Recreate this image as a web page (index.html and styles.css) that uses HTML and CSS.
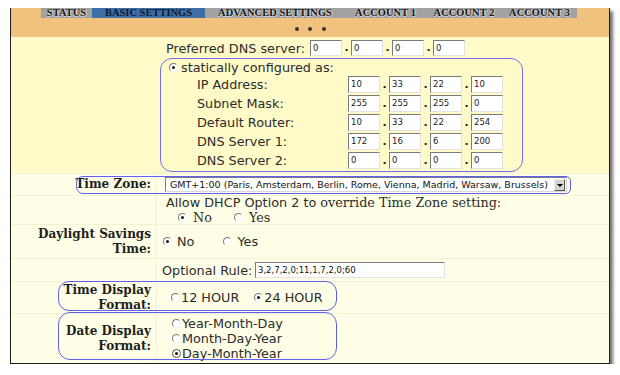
FILE: index.html
```html
<!DOCTYPE html>
<html>
<head>
<meta charset="utf-8">
<title>Basic Settings</title>
<link rel="stylesheet" href="styles.css">
</head>
<body>
<div class="window">
  <div class="header">
    <div class="tabs">
      <span class="tab t1">STATUS</span>
      <span class="tab t2 active">BASIC SETTINGS</span>
      <span class="tab t3">ADVANCED SETTINGS</span>
      <span class="tab t4">ACCOUNT 1</span>
      <span class="tab t5">ACCOUNT 2</span>
      <span class="tab t6">ACCOUNT 3</span>
    </div>
    <div class="dots"><i></i><i></i><i></i></div>
  </div>

  <div class="dns">
    <div class="pref">
      <span class="pref-label">Preferred DNS server:</span>
      <div class="ip">
        <span class="box">0</span><span class="sep">.</span><span class="box">0</span><span class="sep">.</span><span class="box">0</span><span class="sep">.</span><span class="box">0</span>
      </div>
    </div>
    <div class="static">
      <div class="static-head"><span class="radio on"></span><span>statically configured as:</span></div>
      <div class="ip-row"><span class="ip-label">IP Address:</span>
        <div class="ip"><span class="box">10</span><span class="sep">.</span><span class="box">33</span><span class="sep">.</span><span class="box">22</span><span class="sep">.</span><span class="box">10</span></div></div>
      <div class="ip-row"><span class="ip-label">Subnet Mask:</span>
        <div class="ip"><span class="box">255</span><span class="sep">.</span><span class="box">255</span><span class="sep">.</span><span class="box">255</span><span class="sep">.</span><span class="box">0</span></div></div>
      <div class="ip-row"><span class="ip-label">Default Router:</span>
        <div class="ip"><span class="box">10</span><span class="sep">.</span><span class="box">33</span><span class="sep">.</span><span class="box">22</span><span class="sep">.</span><span class="box">254</span></div></div>
      <div class="ip-row"><span class="ip-label">DNS Server 1:</span>
        <div class="ip"><span class="box">172</span><span class="sep">.</span><span class="box">16</span><span class="sep">.</span><span class="box">6</span><span class="sep">.</span><span class="box">200</span></div></div>
      <div class="ip-row"><span class="ip-label">DNS Server 2:</span>
        <div class="ip"><span class="box">0</span><span class="sep">.</span><span class="box">0</span><span class="sep">.</span><span class="box">0</span><span class="sep">.</span><span class="box">0</span></div></div>
    </div>
  </div>

  <div class="settings">
    <div class="row r-tz">
      <div class="lbl">Time Zone:</div>
      <div class="val v-tz">
        <div class="select"><span class="sel-text">GMT+1:00 (Paris, Amsterdam, Berlin, Rome, Vienna, Madrid, Warsaw, Brussels)</span><span class="sel-btn"></span></div>
      </div>
    </div>
    <div class="row r-dhcp">
      <div class="lbl"></div>
      <div class="val v-dhcp">
        <div class="dhcp-text">Allow DHCP Option 2 to <span class="serif">override Time Zone setting:</span></div>
        <div class="choices serif dhcp-choices">
          <span class="opt"><span class="radio on"></span>No</span>
          <span class="opt"><span class="radio"></span>Yes</span>
        </div>
      </div>
    </div>
    <div class="row r-dst">
      <div class="lbl">Daylight Savings<br>Time:</div>
      <div class="val v-dst">
        <div class="choices dst-choices">
          <span class="opt"><span class="radio on"></span>No</span>
          <span class="opt"><span class="radio"></span>Yes</span>
        </div>
      </div>
    </div>
    <div class="row r-rule">
      <div class="lbl"></div>
      <div class="val v-rule">
        <span class="rule-label">Optional Rule:</span><span class="rule-box">3,2,7,2,0;11,1,7,2,0;60</span>
      </div>
    </div>
    <div class="row r-time">
      <div class="lbl">Time Display<br>Format:</div>
      <div class="val v-time">
        <span class="opt"><span class="radio"></span>12 HOUR</span>
        <span class="opt"><span class="radio on"></span>24 HOUR</span>
      </div>
    </div>
    <div class="row r-date">
      <div class="lbl">Date Display<br>Format:</div>
      <div class="val v-date">
        <span class="opt"><span class="radio"></span>Year-Month-Day</span>
        <span class="opt"><span class="radio"></span>Month-Day-Year</span>
        <span class="opt"><span class="radio on ring"></span>Day-Month-Year</span>
      </div>
    </div>
  </div>

  <div class="mark m-tz"></div>
  <div class="mark m-time"></div>
  <div class="mark m-date"></div>
</div>
</body>
</html>
```

FILE: styles.css
```css
html, body {
  margin: 0;
  background: #ffffff;
}
body {
  font-family: "DejaVu Sans", sans-serif;
  color: #2c2c2c;
  font-size: 12.8px;
}
.window {
  position: relative;
  margin: 8px 0 0 10px;
  width: 598px;
  border: 1px solid #1c1c1c;
  border-top: 0;
  box-shadow: 3px 3px 3px rgba(0, 0, 0, 0.55);
}

/* header */
.header {
  height: 29px;
  background: #f1c27d;
  overflow: hidden;
}
.tabs {
  display: flex;
  margin-left: 30px;
  width: 536px;
  height: 10px;
  background: #a2a2a2;
  overflow: hidden;
}
.tab {
  display: block;
  text-align: center;
  font: bold 10.5px/9px "Liberation Serif", serif;
  color: #161616;
  text-shadow: 1px 0 0 #d8d8d8, 0 1px 0 #d8d8d8;
  white-space: nowrap;
}
.t1 { width: 51px; }
.t2 { width: 113px; }
.t3 { width: 140px; }
.t4 { width: 81px; }
.t5 { width: 76px; }
.t6 { width: 75px; }
.tab.active {
  background: #3d6ea6;
  color: #0e1a33;
  text-shadow: none;
}
.dots {
  display: flex;
  justify-content: center;
  gap: 9.5px;
  margin-top: 9px;
}
.dots i {
  display: block;
  width: 4px;
  height: 4px;
  border-radius: 50%;
  background: #333333;
}

/* DNS section */
.dns {
  background: #fffbc8;
  height: 136px;
  box-sizing: border-box;
  padding-top: 3px;
}
.pref {
  display: flex;
  align-items: center;
  height: 16px;
  padding-left: 155px;
}
.pref-label {
  width: 144px;
  white-space: nowrap;
}
.ip {
  display: flex;
  align-items: center;
}
.box {
  display: block;
  width: 32px;
  height: 16px;
  box-sizing: border-box;
  background: #ffffff;
  border: 1px solid;
  border-color: #7b7b7b #e2e2e2 #e2e2e2 #7b7b7b;
  font-size: 8.5px;
  line-height: 14px;
  padding-left: 2px;
  color: #222222;
}
.sep {
  display: block;
  width: 9px;
  text-align: center;
  font-weight: bold;
  font-size: 11px;
  line-height: 14px;
  color: #222222;
}
.static {
  margin: 2px 0 0 149px;
  width: 363px;
  height: 114px;
  box-sizing: border-box;
  border: 1.5px solid #6f6ff0;
  border-radius: 12px;
  padding: 1px 0 0 8px;
}
.static-head {
  display: flex;
  align-items: center;
  height: 15px;
  gap: 3px;
}
.ip-row {
  display: flex;
  align-items: center;
  height: 19px;
  padding-left: 28px;
}
.ip-label {
  width: 151px;
  white-space: nowrap;
}
.ip-row .box {
  height: 17px;
  line-height: 15px;
}

/* radios */
.radio {
  display: inline-block;
  position: relative;
  width: 9px;
  height: 9px;
  box-sizing: border-box;
  border-radius: 50%;
  border: 1px solid;
  border-color: #7a7a7a #f4f4f4 #f4f4f4 #7a7a7a;
  background: #ffffff;
  vertical-align: middle;
  flex: none;
}
.radio.on::after {
  content: "";
  position: absolute;
  left: 2px;
  top: 2px;
  width: 3px;
  height: 3px;
  border-radius: 50%;
  background: #111111;
}
.radio.ring {
  border-color: #555555;
}

/* settings table */
.settings {
  background: #fffee6;
}
.row {
  display: grid;
  grid-template-columns: 146px 1fr;
  border-top: 1px solid #f4f0d3;
  box-sizing: border-box;
}
.lbl {
  display: flex;
  flex-direction: column;
  justify-content: center;
  text-align: right;
  padding-right: 5px;
  border-right: 1px solid #f4f0d3;
  font: bold 12px/15px "DejaVu Serif", serif;
  color: #1e1e1e;
}
.val {
  display: flex;
  flex-direction: column;
  justify-content: center;
}
.r-tz { height: 22px; }
.r-dhcp { height: 29px; }
.r-dst { height: 34px; }
.r-rule { height: 23px; }
.r-time { height: 32px; }
.r-date { height: 50px; }

.v-tz { padding-left: 8px; }
.select {
  display: flex;
  align-items: center;
  width: 402px;
  height: 15px;
  box-sizing: border-box;
  background: #ffffff;
  border: 1px solid;
  border-color: #7b7b7b #d8d8d8 #d8d8d8 #7b7b7b;
  padding: 0 1px 0 4px;
}
.sel-text {
  flex: 1;
  font-size: 9.5px;
  white-space: nowrap;
  color: #111111;
}
.sel-btn {
  position: relative;
  width: 11px;
  height: 12px;
  box-sizing: border-box;
  background: #d6d3cc;
  border: 1px solid;
  border-color: #f2f2f2 #5a5a5a #5a5a5a #f2f2f2;
}
.sel-btn::after {
  content: "";
  position: absolute;
  left: 2px;
  top: 4px;
  border-left: 3px solid transparent;
  border-right: 3px solid transparent;
  border-top: 3px solid #000000;
}

.serif {
  font-family: "DejaVu Serif", serif;
}
.v-dhcp { padding-left: 9px; }
.dhcp-text {
  white-space: nowrap;
  line-height: 14px;
}
.choices {
  display: flex;
}
.opt {
  display: flex;
  align-items: center;
  white-space: nowrap;
}
.dhcp-choices {
  padding-left: 12px;
  line-height: 15px;
}
.dhcp-choices .opt { gap: 6px; }
.dhcp-choices .opt + .opt { margin-left: 22px; }
.dst-choices { padding-left: 6px; }
.dst-choices .opt { gap: 5px; }
.dst-choices .opt + .opt { margin-left: 29px; }

.v-rule {
  flex-direction: row;
  justify-content: flex-start;
  align-items: center;
  padding-left: 5px;
}
.rule-label {
  width: 93px;
  white-space: nowrap;
}
.rule-box {
  display: block;
  width: 190px;
  height: 16px;
  box-sizing: border-box;
  background: #ffffff;
  border: 1px solid;
  border-color: #7b7b7b #e2e2e2 #e2e2e2 #7b7b7b;
  font-size: 8.5px;
  line-height: 14px;
  padding-left: 2px;
  color: #111111;
}

.v-time {
  flex-direction: row;
  justify-content: flex-start;
  align-items: center;
  padding-left: 14px;
}
.v-time .opt { gap: 1px; }
.v-time .opt + .opt { margin-left: 15px; }

.v-date {
  padding-left: 15px;
  line-height: 15px;
}
.v-date .opt { gap: 1px; }

/* hand-drawn annotation marks */
.mark {
  position: absolute;
  border: 1.5px solid #5f5ff0;
  box-sizing: border-box;
  pointer-events: none;
}
.m-tz {
  left: 65px;
  top: 168px;
  width: 495px;
  height: 18px;
  border-radius: 7px 5px 5px 7px;
}
.m-time {
  left: 47px;
  top: 273px;
  width: 279px;
  height: 30px;
  border-radius: 11px;
}
.m-date {
  left: 47px;
  top: 304px;
  width: 279px;
  height: 48px;
  border-radius: 12px;
}
```
